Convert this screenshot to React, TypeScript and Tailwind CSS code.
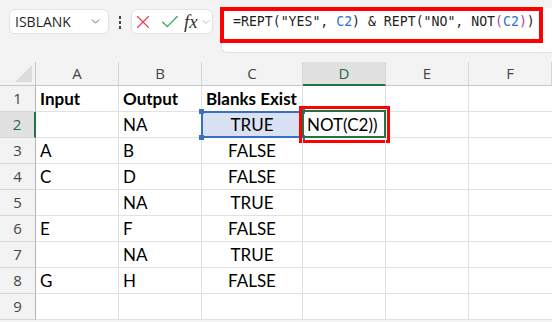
import { X, Check, ChevronDown } from "lucide-react";

const cols = ["A", "B", "C", "D", "E", "F"];

const rows: { a: string; b: string; c: string; bold?: boolean }[] = [
  { a: "Input", b: "Output", c: "Blanks Exist", bold: true },
  { a: "", b: "NA", c: "TRUE" },
  { a: "A", b: "B", c: "FALSE" },
  { a: "C", b: "D", c: "FALSE" },
  { a: "", b: "NA", c: "TRUE" },
  { a: "E", b: "F", c: "FALSE" },
  { a: "", b: "NA", c: "TRUE" },
  { a: "G", b: "H", c: "FALSE" },
  { a: "", b: "", c: "" },
];

const cellFont = { fontFamily: "Lato, 'Open Sans', sans-serif" };

function Toolbar() {
  return (
    <div className="flex h-[62px] bg-[#f3f3f3]">
      {/* Name box */}
      <div className="ml-[9px] mt-[9px] flex h-[25px] w-[100px] items-center justify-between rounded-md border border-[#e2e2e2] bg-white pl-[5px] pr-[6px]">
        <span className="text-[14px] text-[#1f1f1f] font-['Open_Sans',sans-serif]">ISBLANK</span>
        <ChevronDown size={13} strokeWidth={1.6} className="text-[#555]" />
      </div>
      <div className="mt-[16px] flex w-[22px] flex-col items-center gap-[2.5px]">
        <span className="h-[2.5px] w-[2.5px] bg-[#444]" />
        <span className="h-[2.5px] w-[2.5px] bg-[#444]" />
        <span className="h-[2.5px] w-[2.5px] bg-[#444]" />
      </div>
      {/* Cancel / enter / fx */}
      <div className="mt-[9px] flex h-[25px] w-[82px] items-center rounded-md border border-[#e2e2e2] bg-white">
        <X size={22} strokeWidth={1.2} className="text-[#e0404a]" />
        <Check size={22} strokeWidth={1.2} className="ml-[5px] text-[#26a047]" />
        <span className="ml-[3px] text-[19px] italic leading-none text-[#333] font-['Liberation_Serif',serif]">fx</span>
        <ChevronDown size={12} strokeWidth={1.5} className="ml-[2px] text-[#aaa]" />
      </div>
      {/* Formula bar */}
      <div className="relative ml-[8px] mt-[8px] h-[45px] flex-1 rounded-bl-md border-b border-l border-[#e2e2e2] bg-white">
        <div className="pl-[11px] pt-[4px] text-[13.2px] leading-[20px] text-[#1f1f1f] font-['DejaVu_Sans_Mono',monospace] whitespace-pre">
          =REPT("YES", <span className="text-[#2f6fd1]">C2</span>) &amp; REPT("NO", NOT
          <span className="text-[#a8459f]">(</span>
          <span className="text-[#2f6fd1]">C2</span>
          <span className="text-[#a8459f]">)</span>)
        </div>
        <div className="pointer-events-none absolute left-[-2px] top-[-1px] h-[36px] w-[323px] border-[4px] border-[#ff0000]" />
      </div>
    </div>
  );
}

function Sheet() {
  return (
    <div className="grid grid-cols-[36px_83px_83px_101px_83px_83px_83px] bg-white" style={cellFont}>
      {/* corner */}
      <div className="relative h-[24px] border-r border-b border-[#c6c6c6] bg-[#f3f3f3]">
        <div className="absolute bottom-[3px] right-[3px] h-0 w-0" style={{ borderBottom: "17px solid #dcdcdc", borderLeft: "17px solid transparent" }} />
      </div>
      {cols.map((c) =>
        c === "D" ? (
          <div key={c} className="flex h-[24px] items-center justify-center border-r border-b-2 border-r-[#d6d6d6] border-b-[#217346] bg-[#e1e1e1] text-[15px] text-[#1d6b40] font-['Open_Sans',sans-serif]">
            {c}
          </div>
        ) : (
          <div key={c} className="flex h-[24px] items-center justify-center border-r border-b border-r-[#d6d6d6] border-b-[#c6c6c6] bg-[#f3f3f3] text-[15px] text-[#444] font-['Open_Sans',sans-serif]">
            {c}
          </div>
        )
      )}
      {rows.map((r, i) => {
        const n = i + 1;
        const active = n === 2;
        return [
          <div
            key={`h${n}`}
            className={
              active
                ? "flex h-[26px] items-center justify-center border-r-2 border-b border-r-[#217346] border-b-[#d6d6d6] bg-[#e1e1e1] text-[15px] text-[#1d6b40] font-['Open_Sans',sans-serif]"
                : "flex h-[26px] items-center justify-center border-r border-b border-r-[#b5b5b5] border-b-[#d6d6d6] bg-[#f3f3f3] text-[15px] text-[#444] font-['Open_Sans',sans-serif]"
            }
          >
            {n}
          </div>,
          <div key={`a${n}`} className={`flex h-[26px] items-center border-r border-b border-[#e1e1e1] pl-[4px] text-[17px] text-black ${r.bold ? "font-bold" : ""}`}>
            {r.a}
          </div>,
          <div key={`b${n}`} className={`flex h-[26px] items-center border-r border-b border-[#e1e1e1] pl-[4px] text-[17px] text-black ${r.bold ? "font-bold" : ""}`}>
            {r.b}
          </div>,
          <div
            key={`c${n}`}
            className={`relative flex h-[26px] items-center whitespace-nowrap border-r border-b border-[#e1e1e1] text-[17px] text-black ${r.bold ? "pl-[4px] font-bold" : "justify-center"} ${active ? "bg-[#d9e1f2]" : ""}`}
          >
            {r.c}
            {active && (
              <div className="pointer-events-none absolute left-[-1px] top-[-1px] bottom-[-1px] right-[-1px] border-2 border-[#3b6fc6]">
                <span className="absolute left-[-4px] top-[-4px] h-[5px] w-[5px] bg-[#3b6fc6]" />
                <span className="absolute right-[-4px] top-[-4px] h-[5px] w-[5px] bg-[#3b6fc6]" />
                <span className="absolute left-[-4px] bottom-[-4px] h-[5px] w-[5px] bg-[#3b6fc6]" />
                <span className="absolute right-[-4px] bottom-[-4px] h-[5px] w-[5px] bg-[#3b6fc6]" />
              </div>
            )}
          </div>,
          <div key={`d${n}`} className="relative flex h-[26px] items-center border-r border-b border-[#e1e1e1] pl-[4px] text-[17px] text-black">
            {active && (
              <>
                NOT(C2))
                <div className="pointer-events-none absolute left-[-1px] top-[-2px] bottom-[-1px] right-[-1px] border-2 border-[#217346]" />
                <div className="pointer-events-none absolute left-[-4px] top-[-6px] bottom-[-6px] right-[-5px] border-[3px] border-[#ff0000]" />
              </>
            )}
          </div>,
          <div key={`e${n}`} className="h-[26px] border-r border-b border-[#e1e1e1]" />,
          <div key={`f${n}`} className="h-[26px] border-b border-[#e1e1e1]" />,
        ];
      })}
    </div>
  );
}

export default function App() {
  return (
    <div className="h-[322px] w-[552px] overflow-hidden bg-[#f3f3f3]">
      <Toolbar />
      <Sheet />
    </div>
  );
}
